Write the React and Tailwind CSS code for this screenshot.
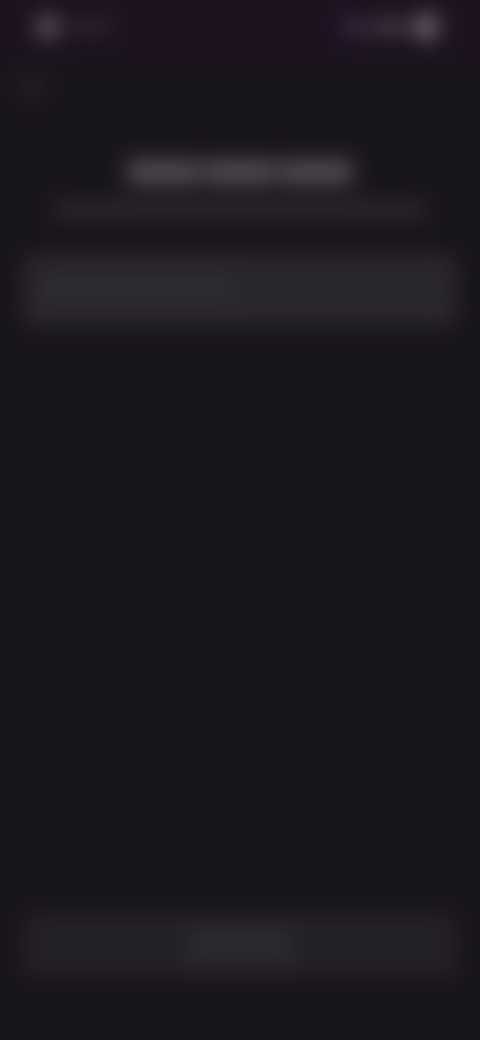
export default function App() {
  return (
    <div className="h-[1040px] w-[480px] overflow-hidden bg-[#19161b]">
      <div className="flex h-full flex-col blur-[10px]">
        <header className="-mx-[24px] -mt-[24px] flex h-[80px] shrink-0 items-center justify-between bg-[#1e1221] pt-[24px] pl-[60px] pr-[64px] pb-[2px]">
          <div className="flex items-center gap-[10px]">
            <div className="h-[26px] w-[24px] rounded-full bg-[#565054]" />
            <div className="h-[10px] w-[42px] rounded bg-[#352a30]" />
          </div>
          <div className="flex items-center gap-[6px]">
            <div className="h-[14px] w-[20px] rounded bg-[#3a3644]" />
            <div className="h-[16px] w-[36px] rounded bg-[#443846]" />
            <div className="h-[28px] w-[28px] rounded-full bg-[#625d64]" />
          </div>
        </header>
        <div className="mt-[18px] ml-[20px] h-[24px] w-[24px] shrink-0 rounded bg-[#211e25]" />
        <main className="flex shrink-0 flex-col items-center pt-[61px]">
          <div className="flex h-[26px] w-[226px] gap-[4px]">
            <div className="h-full flex-1 rounded-sm bg-[#4c484f]" />
            <div className="h-full flex-1 rounded-sm bg-[#4c484f]" />
            <div className="h-full flex-1 rounded-sm bg-[#4c484f]" />
          </div>
          <div className="mt-[16px] h-[16px] w-[372px] rounded bg-[#2c292f]" />
          <div className="mt-[37px] flex h-[72px] w-[434px] items-center rounded-xl bg-[#2a272c] px-[20px]">
            <div className="h-[18px] w-[190px] rounded bg-[#302d33]" />
          </div>
        </main>
        <footer className="mt-auto mb-[64px] flex h-[62px] w-[434px] shrink-0 items-center self-center rounded-xl bg-[#242126] px-[24px]">
          <div className="h-[34px] flex-1 rounded bg-[#252227]" />
          <div className="mx-[20px] h-[42px] w-[110px] rounded bg-[#2b282e]" />
          <div className="h-[34px] flex-1 rounded bg-[#252227]" />
        </footer>
      </div>
    </div>
  );
}
